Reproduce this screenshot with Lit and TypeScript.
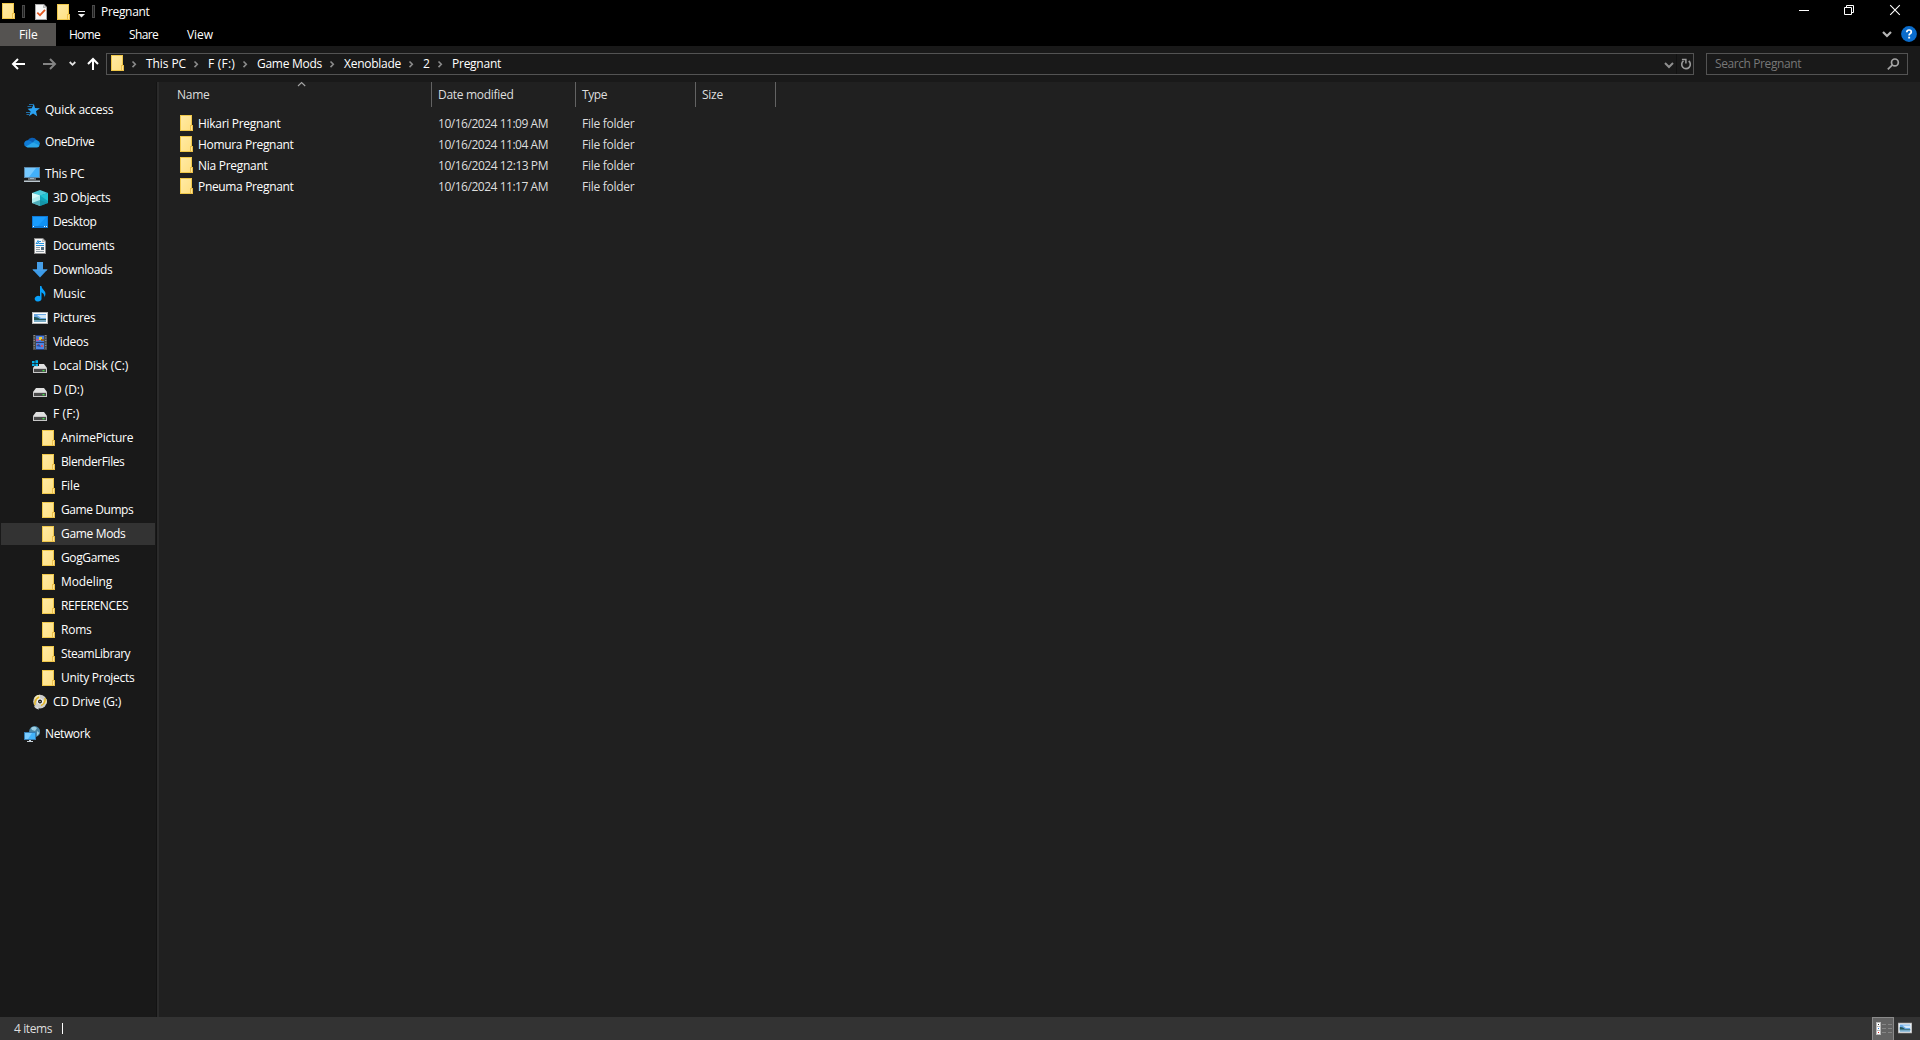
import { LitElement, html, svg, css } from "lit";
import { customElement, property } from "lit/decorators.js";

const ICONS: Record<string, unknown> = {
  folder: svg`<rect x="2" y="0" width="12" height="16" fill="#f0c84a"/><rect x="3" y="1" width="10" height="14" fill="url(#fg)"/><rect x="12" y="10" width="3" height="6" fill="#edc04a"/><rect x="13" y="11" width="1" height="4" fill="#ffe694"/><defs><linearGradient id="fg" x1="0" y1="0" x2="1" y2="1"><stop offset="0" stop-color="#ffeaa3"/><stop offset="1" stop-color="#ffe083"/></linearGradient></defs>`,
  star: svg`<path d="M9.8 1.4 11 6 15.9 6.3 12 9.2 13.2 14.2 9 11.4 5 14.3 6.6 9.5 3.6 6.7 7.8 6.2Z" fill="#2ba2f2"/><path d="M5 2.5h4M3.5 4.5h4M2 10.5h4M2.5 12.5h3" stroke="#1f6fa8" stroke-width="1"/>`,
  onedrive: svg`<path d="M3.5 7A5 4.6 0 0 1 12.6 6L8 10 2.5 10Z" fill="#0a5fb6"/><path d="M4 13.3A3.6 3.6 0 0 1 1.2 7.2Q3.5 5.2 6.5 7L12 10.5Z" fill="#0f7bd6"/><path d="M9 8.5Q10.5 5.4 13.2 6.2 16 7.2 16 10L14.5 12Z" fill="#1490df"/><path d="M2 12.5 9.2 8.3 15.6 11.4Q15 13.4 13 13.4H4Q2.7 13.4 2 12.5Z" fill="#2aa7ea"/>`,
  pc: svg`<rect x="0" y="1" width="16" height="11" fill="#5c87a8"/><rect x="1" y="2" width="14" height="9" fill="#42b0fb"/><path d="M1 2h11L5 11H1z" fill="#76c9ff"/><path d="M6 12h4v1H6z" fill="#7a9db5"/><path d="M4 12.5h8v1H4zM0 14.5h16v1.5H0z" fill="#bcc8d0"/>`,
  cube: svg`<path d="M8 0 16 3 8 6 0 3Z" fill="#4dc9d9"/><path d="M0 3 8 5.5V16L0 13Z" fill="#b2eef0"/><path d="M0 3 8 5.5 0 9Z" fill="#d8fafa"/><path d="M16 3 8 5.5V16L16 13Z" fill="#12a5bb"/><path d="M16 3 8 5.5 16 11Z" fill="#22c3d3"/><path d="M0 13 8 10 16 13 8 16Z" fill="#178c9e" opacity=".65"/>`,
  desktop: svg`<rect x="0" y="2" width="16" height="12" fill="#0f7ad7"/><rect x="1" y="3" width="14" height="9" fill="#1a9dff"/><path d="M14 3 6 12H15V3Z" fill="#0f91f5"/><path d="M1 12.5h1M12 12.5h1M14 12.5h1" stroke="#eaf7ff"/>`,
  doc: svg`<path d="M2 0H11L14 3V16H2Z" fill="#8b8b8b"/><path d="M3 1H10.5L13 3.5V15H3Z" fill="#f7f7f7"/><path d="M10 1 13 4H10Z" fill="#b9b9b9"/><path d="M4 5.5H6M7 3.5H9M7 5.5H12M4 7.5H12" stroke="#2391dc"/><path d="M4 6 6 2.5 7 6" fill="none" stroke="#2391dc"/><path d="M4 9.5H8M4 11.5H8M4 13.5H12" stroke="#8d9aa3"/><rect x="9" y="9" width="3" height="3" fill="#4e6b80"/>`,
  down: svg`<path d="M5 0H11V7.5H15.5L8 15.5.5 7.5H5Z" fill="#3c9be9"/><path d="M5 0H11V7.5H15.5L14 9H2L.5 7.5H5Z" fill="#469fe8"/>`,
  music: svg`<path d="M8 0H9.4Q9.6 2.5 12 4.5 14.8 7.3 12.3 11.5 13 7.8 9.5 6.2V12.5A3.4 2.9 0 1 1 8 10.3Z" fill="#08a1fb"/>`,
  picture: svg`<rect x="0" y="2" width="16" height="12" fill="#b7b7b7"/><rect x="1" y="3" width="14" height="10" fill="#fff"/><rect x="2" y="4" width="12" height="8" fill="#6ba9e4"/><path d="M5 5h9v3H9Z" fill="#d4e9f8"/><path d="M2 7Q5 6.5 8 9H14V10H2Z" fill="#235757"/><path d="M2 10H14V12H2Z" fill="#78abc5"/>`,
  video: svg`<rect x="1" y="1" width="14" height="15" fill="#4a4a4a"/><path d="M2.2 1V16M13.8 1V16" stroke="#a4a4a4" stroke-dasharray="1 1.5"/><rect x="4" y="1" width="8" height="15" fill="#263d79"/><rect x="4" y="2" width="8" height="6" fill="#4a7ed7"/><path d="M4 5h3v2H4z" fill="#b757a1"/><path d="M7 3h3v3H7z" fill="#efcc36"/><path d="M9 5h3v2H9z" fill="#99601c"/><path d="M4 9H12V15H4Z" fill="#4d86e5"/><path d="M5 10h2v2H5zM9 11h2v2H9z" fill="#d0506a"/><path d="M4 12 7 10 9 13Z" fill="#294e9d"/>`,
  drive: svg`<path d="M4 6H12L15 10H1Z" fill="#e0e0e0"/><path d="M1 10H15V15H1Z" fill="#c7c7c7"/><path d="M2 11H14V14H2Z" fill="#494949"/><rect x="10.5" y="12" width="2" height="1.3" fill="#43e04a"/>`,
  disk: svg`<path d="M4 6H12L15 10H1Z" fill="#e0e0e0"/><path d="M1 10H15V15H1Z" fill="#c7c7c7"/><path d="M2 11H14V14H2Z" fill="#494949"/><rect x="10.5" y="12" width="2" height="1.3" fill="#43e04a"/><path d="M0 1H7V8H0Z" fill="#191919"/><path d="M0 3H2.6V5H0ZM3.4 2.2H6V5H3.4ZM0 5.8H2.6V8H0ZM3.4 5.8H6V8.2H3.4Z" fill="#06b4ee"/>`,
  cd: svg`<circle cx="8" cy="7.6" r="6.8" fill="#cfcfcb"/><path d="M8 7.6 2 4.2A7 7 0 0 1 8 .8ZM8 7.6 14.2 10A7 7 0 0 0 14.5 5Z" fill="#efe7bb"/><path d="M3 11Q2 6 7 3M13 4Q14 9 9 11.5" stroke="#e3b729" stroke-width="1.6" fill="none"/><circle cx="8" cy="7.6" r="3" fill="#f2f2f2"/><circle cx="8" cy="7.6" r="2" fill="#1c1c1c"/><circle cx="8" cy="7.6" r=".7" fill="#fff"/><path d="M2 12Q3 15 7 15.4L6 13Z" fill="#ddd"/>`,
  network: svg`<circle cx="10.6" cy="5.6" r="5.5" fill="#4a86a6"/><path d="M7 2Q10-.5 13 2L11 5 8 4ZM13 5 15.5 7 13 10Z" fill="#9ed0e4"/><rect x="0" y="6" width="12" height="8" fill="#357fb6"/><rect x="1" y="7" width="10" height="6" fill="#42b4fb"/><path d="M1 7H8L4 13H1Z" fill="#7accff"/><path d="M5 14H7V15H9V16H3V15H5Z" fill="#c8d3da"/>`,
  check: svg`<path d="M2 0H11L14 3V16H2Z" fill="#a9a9a9"/><path d="M3 1H10.5L13 3.5V15H3Z" fill="#f9f9f9"/><path d="M10 1V4H13Z" fill="#b9b9b9"/><path d="M4.3 8.6 7 11.2 12 5.8" fill="none" stroke="#e2571f" stroke-width="1.7"/>`,
  back: svg`<path d="M14 8H2.5M7 3 2 8 7 13" fill="none" stroke="#fff" stroke-width="2"/>`,
  forward: svg`<path d="M2 8H13.5M9 3 14 8 9 13" fill="none" stroke="#848484" stroke-width="2"/>`,
  up: svg`<path d="M8 14V3M3 8 8 3 13 8" fill="none" stroke="#fff" stroke-width="2"/>`,
  recent: svg`<path d="M5.7 6 8.5 8.8 11.3 6" fill="none" stroke="#e2e2e2" stroke-width="1.8"/>`,
  crumb: svg`<path d="M6.5 5.5 9.3 8.3 6.5 11.1" fill="none" stroke="#8b8b8b" stroke-width="1.6"/>`,
  chevron: svg`<path d="M5 7 9 11 13 7" fill="none" stroke="#8f8f8f" stroke-width="2"/>`,
  chevronLight: svg`<path d="M4 6 8 10 12 6" fill="none" stroke="#b6b6b6" stroke-width="2.2"/>`,
  refresh: svg`<path d="M11.7 5A4.3 4.3 0 1 1 6.5 4.9" fill="none" stroke="#9b9b9b" stroke-width="1.6"/><path d="M4.9 3.6H8.9V7.6" fill="none" stroke="#9b9b9b" stroke-width="1.5"/>`,
  search: svg`<circle cx="9.9" cy="6.4" r="3.4" fill="none" stroke="#a3a3a3" stroke-width="1.7"/><path d="M7.4 8.9 2.8 13.4" stroke="#a3a3a3" stroke-width="1.8"/>`,
  min: svg`<path d="M4 8.5H14" stroke="#fff"/>`,
  restore: svg`<path d="M3.5 5.5H10.5V12.5H3.5ZM5.5 5V3.5H12.5V10.5H11" fill="none" stroke="#fff"/>`,
  close: svg`<path d="M3.2 3.2 12.8 12.8M12.8 3.2 3.2 12.8" stroke="#fff" stroke-width="1.1"/>`,
  menu: svg`<path d="M4 5.5H11" stroke="#eee"/><path d="M4 8H11L7.5 11.5Z" fill="#eee"/>`,
  sort: svg`<path d="M5 10 8.6 6.5 12.2 10" fill="none" stroke="#a5a5a5" stroke-width="1.1"/>`,
  help: svg`<circle cx="8" cy="8" r="7.9" fill="#0a6ccc"/><path d="M5.8 6.3Q5.8 4 8.1 4 10.3 4 10.3 5.9 10.3 7 9 7.8 8.1 8.3 8.1 9.6" fill="none" stroke="#fff" stroke-width="1.7"/><rect x="7.2" y="10.7" width="1.9" height="1.8" fill="#fff"/>`,
};

@customElement("ui-icon")
class UiIcon extends LitElement {
  static styles = css`
    :host { display: block; flex: none; width: 16px; height: 16px; }
    .glyph { display: block; width: 100%; height: 100%; }
  `;
  @property() name = "";
  render() {
    return html`<svg class="glyph" viewBox="0 0 16 16">${ICONS[this.name]}</svg>`;
  }
}

/** A line of text tracked so that it takes up the given width. */
@customElement("ui-label")
class UiLabel extends LitElement {
  static styles = css`
    :host { display: block; flex: none; white-space: pre; }
    .text { display: inline-block; }
  `;
  @property() text = "";
  @property({ type: Number }) w = 0;
  updated() {
    const el = this.renderRoot.querySelector<HTMLElement>(".text");
    if (!el || !this.w) return;
    el.style.letterSpacing = "0px";
    const natural = el.getBoundingClientRect().width;
    el.style.letterSpacing = `${((this.w - natural) / this.text.length).toFixed(3)}px`;
  }
  render() {
    return html`<span class="text">${this.text}</span>`;
  }
}

type Node = { icon: string; text: string; w: number; level: number; selected?: boolean };
const GROUPS: Node[][] = [
  [{ icon: "star", text: "Quick access", w: 68.3, level: 0 }],
  [{ icon: "onedrive", text: "OneDrive", w: 49.3, level: 0 }],
  [
    { icon: "pc", text: "This PC", w: 39.4, level: 0 },
    { icon: "cube", text: "3D Objects", w: 57.3, level: 1 },
    { icon: "desktop", text: "Desktop", w: 43.4, level: 1 },
    { icon: "doc", text: "Documents", w: 61.3, level: 1 },
    { icon: "down", text: "Downloads", w: 59.3, level: 1 },
    { icon: "music", text: "Music", w: 32.4, level: 1 },
    { icon: "picture", text: "Pictures", w: 42.4, level: 1 },
    { icon: "video", text: "Videos", w: 35.4, level: 1 },
    { icon: "disk", text: "Local Disk (C:)", w: 75.2, level: 1 },
    { icon: "drive", text: "D (D:)", w: 30.4, level: 1 },
    { icon: "drive", text: "F (F:)", w: 26.4, level: 1 },
    { icon: "folder", text: "AnimePicture", w: 72.3, level: 2 },
    { icon: "folder", text: "BlenderFiles", w: 63.3, level: 2 },
    { icon: "folder", text: "File", w: 18.6, level: 2 },
    { icon: "folder", text: "Game Dumps", w: 72.3, level: 2 },
    { icon: "folder", text: "Game Mods", w: 64.4, level: 2, selected: true },
    { icon: "folder", text: "GogGames", w: 58.4, level: 2 },
    { icon: "folder", text: "Modeling", w: 51.3, level: 2 },
    { icon: "folder", text: "REFERENCES", w: 67.2, level: 2 },
    { icon: "folder", text: "Roms", w: 30.5, level: 2 },
    { icon: "folder", text: "SteamLibrary", w: 69.2, level: 2 },
    { icon: "folder", text: "Unity Projects", w: 73.4, level: 2 },
    { icon: "cd", text: "CD Drive (G:)", w: 68, level: 1 },
  ],
  [{ icon: "network", text: "Network", w: 45.2, level: 0 }],
];

const CRUMBS = [
  { text: "This PC", w: 40 },
  { text: "F (F:)", w: 27 },
  { text: "Game Mods", w: 65 },
  { text: "Xenoblade", w: 57 },
  { text: "2", w: 7 },
  { text: "Pregnant", w: 49 },
];

const FILES = [
  { name: "Hikari Pregnant", w: 82.5, date: "10/16/2024 11:09 AM" },
  { name: "Homura Pregnant", w: 95.5, date: "10/16/2024 11:04 AM" },
  { name: "Nia Pregnant", w: 69.5, date: "10/16/2024 12:13 PM" },
  { name: "Pneuma Pregnant", w: 95.5, date: "10/16/2024 11:17 AM" },
];

@customElement("app-root")
class AppRoot extends LitElement {
  static styles = css`
    :host {
      display: flex; flex-direction: column; width: 1920px; height: 1040px; overflow: hidden;
      background: #202020; color: #fff; font: 12px/16px "Open Sans", "Noto Sans", sans-serif;
      box-sizing: border-box;
    }
    * { box-sizing: border-box; }
    .title { display: flex; height: 23px; background: #000; align-items: center; }
    .quick { display: flex; align-items: center; flex: 1; }
    .bar { width: 3px; height: 13px; border: 1px solid #4a4a4a; background: #222; }
    .i-app { margin: -1px 6px 0 0; }
    .i-check { margin: 1px 6px 0 8px; }
    .i-new { margin-top: 1px; }
    .i-menu { margin: 5px 2px 0 3px; }
    .caption { margin-left: 6px; }
    .windows { display: flex; gap: 30px; padding-right: 17px; margin-top: -3px; }
    .tabs { display: flex; height: 23px; background: #000; align-items: center; }
    .file { width: 56px; height: 23px; background: #555351; padding: 4px 0 0 19px; }
    .tab { margin-left: 13px; }
    .tab + .tab { margin-left: 29px; }
    .spring { flex: 1; }
    .tab-tools { display: flex; gap: 6px; padding-right: 3px; margin-top: -1px; }
    .address { display: flex; height: 36px; background: #191919; align-items: center; padding-left: 11px; }
    .address > .i-fwd { margin-left: 14px; }
    .address > .i-recent { margin-left: 7px; }
    .address > .i-up { margin-left: 5px; margin-right: 5px; }
    .path, .search { display: flex; align-items: center; height: 22px; border: 1px solid #535353; }
    .path { width: 1588px; padding-left: 2px; }
    .path > .root { margin: -2px 1px 0 0; }
    .crumb { display: flex; align-items: center; }
    .crumb ui-icon { margin-right: 4px; }
    .crumb + .crumb ui-icon { margin-left: 2px; }
    .refresh { display: flex; border-left: 1px solid #111; height: 20px; align-items: center; }
    .search { width: 202px; margin-left: 12px; padding: 0 6px 0 8px; color: #777; justify-content: space-between; }
    .body { display: flex; flex: 1; min-height: 0; }
    .nav { display: flex; flex-direction: column; gap: 8px; width: 156px; background: #191919; padding-top: 16px; }
    .group { padding: 1px; }
    .node { display: flex; align-items: center; height: 22px; gap: 5px; padding-left: 23px; }
    .node + .node { margin-top: 2px; }
    .level1 { padding-left: 31px; }
    .level2 { padding-left: 39px; }
    .selected { background: #333; }
    .split { width: 3px; border-left: 1px solid #131313; border-right: 2px solid #2b2b2b; }
    .list { flex: 1; }
    .head { display: flex; height: 25px; color: #dedede; position: relative; }
    .col { border-right: 1px solid #636363; padding: 5px 0 0 6px; }
    .c-name { width: 273px; padding-left: 18px; }
    .c-date { width: 144px; }
    .c-type { width: 120px; }
    .c-size { width: 80px; }
    .sort { position: absolute; left: 134px; top: -6px; }
    .rows { padding-top: 6px; }
    .row { display: flex; height: 21px; color: #dedede; padding: 2px 0 0 19px; }
    .row ui-icon { margin: 0 4px 0 0; }
    .row .name, .row .date, .row .kind { padding-top: 1px; }
    .row .name { width: 240px; color: #fff; }
    .row .date { width: 144px; }
    .status { display: flex; height: 23px; background: #333; color: #dedede; align-items: center; padding-left: 14px; }
    .caret { width: 1px; height: 11px; background: #fff; margin-left: 10px; }
    .view { width: 22px; height: 23px; background: #636363; border: 1px solid #8a8a8a; border-bottom: 0; }
    .v-details { display: block; width: 20px; height: 22px; }
    .v-icons { width: 14px; height: 14px; margin: -2px 8px 0 4px; }
  `;
  render() {
    return html`
      <div class="title">
        <div class="quick">
          <ui-icon class="i-app" name="folder"></ui-icon><i class="bar"></i>
          <ui-icon class="i-check" name="check"></ui-icon><ui-icon class="i-new" name="folder"></ui-icon>
          <ui-icon class="i-menu" name="menu"></ui-icon><i class="bar"></i>
          <ui-label class="caption" text="Pregnant" w="48.5"></ui-label>
        </div>
        <div class="windows">
          <ui-icon name="min"></ui-icon><ui-icon name="restore"></ui-icon><ui-icon name="close"></ui-icon>
        </div>
      </div>
      <div class="tabs">
        <div class="file"><ui-label text="File" w="18.5"></ui-label></div>
        <ui-label class="tab" text="Home" w="31"></ui-label>
        <ui-label class="tab" text="Share" w="29"></ui-label>
        <ui-label class="tab" text="View" w="26"></ui-label>
        <div class="spring"></div>
        <div class="tab-tools"><ui-icon name="chevronLight"></ui-icon><ui-icon name="help"></ui-icon></div>
      </div>
      <div class="address">
        <ui-icon name="back"></ui-icon><ui-icon class="i-fwd" name="forward"></ui-icon>
        <ui-icon class="i-recent" name="recent"></ui-icon><ui-icon class="i-up" name="up"></ui-icon>
        <div class="path">
          <ui-icon class="root" name="folder"></ui-icon>
          ${CRUMBS.map((c) => html`<div class="crumb"><ui-icon name="crumb"></ui-icon><ui-label text=${c.text} w=${c.w}></ui-label></div>`)}
          <div class="spring"></div>
          <ui-icon name="chevron"></ui-icon>
          <div class="refresh"><ui-icon name="refresh"></ui-icon></div>
        </div>
        <div class="search"><ui-label text="Search Pregnant" w="86"></ui-label><ui-icon name="search"></ui-icon></div>
      </div>
      <div class="body">
        <div class="nav">
          ${GROUPS.map((g) => html`<div class="group">${g.map((n) => html`
            <div class="node level${n.level} ${n.selected ? "selected" : ""}">
              <ui-icon name=${n.icon}></ui-icon><ui-label text=${n.text} w=${n.w}></ui-label>
            </div>`)}</div>`)}
        </div>
        <div class="split"></div>
        <div class="list">
          <div class="head">
            <div class="col c-name"><ui-label text="Name" w="32.5"></ui-label></div>
            <div class="col c-date"><ui-label text="Date modified" w="75.5"></ui-label></div>
            <div class="col c-type"><ui-label text="Type" w="25"></ui-label></div>
            <div class="col c-size"><ui-label text="Size" w="21"></ui-label></div>
            <ui-icon class="sort" name="sort"></ui-icon>
          </div>
          <div class="rows">
            ${FILES.map((f) => html`<div class="row">
              <ui-icon name="folder"></ui-icon>
              <div class="name"><ui-label text=${f.name} w=${f.w}></ui-label></div>
              <div class="date"><ui-label text=${f.date} w="110"></ui-label></div>
              <div class="kind"><ui-label text="File folder" w="52.5"></ui-label></div>
            </div>`)}
          </div>
        </div>
      </div>
      <div class="status">
        <ui-label text="4 items" w="38"></ui-label><i class="caret"></i>
        <div class="spring"></div>
        <div class="view">
          <svg class="v-details" viewBox="1 1 20 22">
            <path d="M4 5H9V18H4Z" fill="#b9b9b9"/><path d="M5 6H8V9H5ZM5 10H8V13H5ZM5 14H8V17H5Z" fill="#fff"/>
            <path d="M6 7.5H7" stroke="#333"/><path d="M6 11.5H7" stroke="#237be0"/><path d="M6 15.5H7" stroke="#e02323"/>
            <path d="M10 7.5H14M16 7.5H20M10 11.5H14M16 11.5H20M10 15.5H14M16 15.5H20" stroke="#858585"/>
          </svg>
        </div>
        <ui-icon class="v-icons" name="picture"></ui-icon>
      </div>
    `;
  }
}
